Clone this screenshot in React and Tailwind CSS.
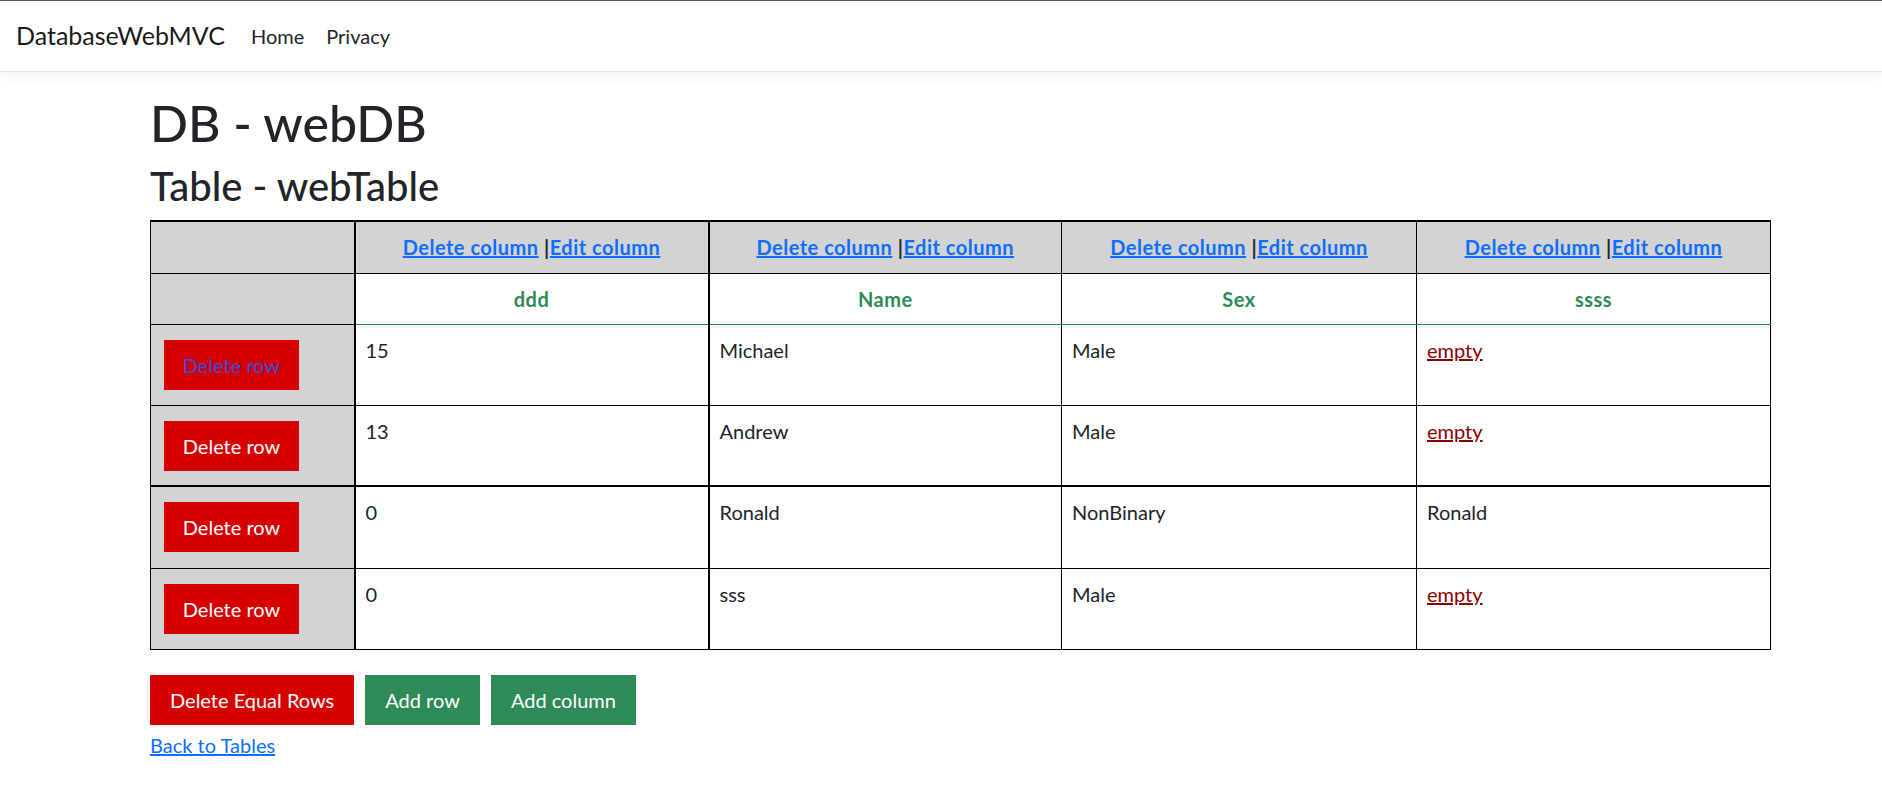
import { useState } from 'react'

const columns = ['ddd', 'Name', 'Sex', 'ssss']

const rows = [
  { id: 1, cells: ['15', 'Michael', 'Male', null], focused: true },
  { id: 2, cells: ['13', 'Andrew', 'Male', null] },
  { id: 3, cells: ['0', 'Ronald', 'NonBinary', 'Ronald'], thick: true },
  { id: 4, cells: ['0', 'sss', 'Male', null] },
]

const Navbar = () => {
  return (
    <nav className="flex items-center h-[72px] border-t border-t-[#5c5c5c] border-b border-b-[#e3e3e3] bg-white shadow-[0_4px_12px_rgba(0,0,0,0.05)] px-4">
      <a className="text-[25px] text-[#1a1a1a] mr-[26px]">DatabaseWebMVC</a>
      <a className="text-[20px] text-[#212529] mr-[22px]">Home</a>
      <a className="text-[20px] text-[#212529]">Privacy</a>
    </nav>
  )
}

const DeleteRowButton = ({ focused }) => (
  <button
    className={
      focused
        ? 'h-[50px] w-[135px] bg-[#d70000] text-[20px] text-[#3b4ad8]'
        : 'h-[50px] w-[135px] bg-[#d70000] text-[20px] text-white'
    }
  >
    Delete row
  </button>
)

const WebTable = () => {
  return (
    <table className="table-fixed border-collapse w-[1620px] border border-black border-t-2 text-[20px] leading-[30px] text-[#212529]">
      <colgroup>
        <col className="w-[204px]" />
        <col className="w-[354px]" />
        <col className="w-[353px]" />
        <col className="w-[355px]" />
        <col className="w-[354px]" />
      </colgroup>
      <thead>
        <tr className="bg-[#d3d3d3] h-[52px]">
          <th className="border border-black border-r-2"></th>
          {columns.map((c, i) => (
            <th
              key={c}
              className={
                i === 0
                  ? 'border border-black border-r-2 p-[10px] font-bold text-center tracking-[0.5px]'
                  : 'border border-black p-[10px] font-bold text-center tracking-[0.5px]'
              }
            >
              <a href="#" className="text-[#0d6efd] underline">Delete column</a> |
              <a href="#" className="text-[#0d6efd] underline">Edit column</a>
            </th>
          ))}
        </tr>
        <tr className="h-[51px]">
          <th className="border border-black border-r-2 bg-[#d3d3d3]"></th>
          {columns.map((c, i) => (
            <th
              key={c}
              className={
                i === 0
                  ? 'border border-black border-r-2 border-b-[#2e8b57] p-[10px] font-bold text-center text-[#2e8b57] bg-white tracking-[0.5px]'
                  : 'border border-black border-b-[#2e8b57] p-[10px] font-bold text-center text-[#2e8b57] bg-white tracking-[0.5px]'
              }
            >
              {c}
            </th>
          ))}
        </tr>
      </thead>
      <tbody>
        {rows.map(row => (
          <tr key={row.id} className={row.thick ? 'h-[82px] border-t-2 border-black' : 'h-[81px]'}>
            <td className="border border-black border-r-2 bg-[#d3d3d3] align-top pl-[13px] pt-[15px]">
              <DeleteRowButton focused={row.focused} />
            </td>
            {row.cells.map((v, i) => (
              <td
                key={i}
                className={
                  i === 0
                    ? 'border border-black border-r-2 align-top p-[10px]'
                    : 'border border-black align-top p-[10px]'
                }
              >
                {v === null ? (
                  <a href="#" className="text-[#8b0000] underline">empty</a>
                ) : (
                  v
                )}
              </td>
            ))}
          </tr>
        ))}
      </tbody>
    </table>
  )
}

export default function App() {
  const [title] = useState('webDB')
  return (
    <div className="min-h-screen bg-white font-['Segoe_UI','Lato',sans-serif] text-[#212529]">
      <Navbar />
      <main className="pl-[150px] pt-[21px] flex flex-col items-start">
        <h1 className="text-[50px] leading-[1.2] font-medium mb-[9px]">DB - {title}</h1>
        <h2 className="text-[40px] leading-[1.2] font-medium mb-[10px]">Table - webTable</h2>
        <WebTable />
        <div className="flex gap-[10px] mt-[25px]">
          <button className="h-[50px] px-5 bg-[#d70000] text-white text-[20px]">Delete Equal Rows</button>
          <button className="h-[50px] px-5 bg-[#2e8b57] text-white text-[20px] ml-[1px]">Add row</button>
          <button className="h-[50px] px-5 bg-[#2e8b57] text-white text-[20px] ml-[1px]">Add column</button>
        </div>
        <a href="#" className="mt-[5px] text-[20px] leading-[30px] text-[#0d6efd] underline">Back to Tables</a>
      </main>
    </div>
  )
}
